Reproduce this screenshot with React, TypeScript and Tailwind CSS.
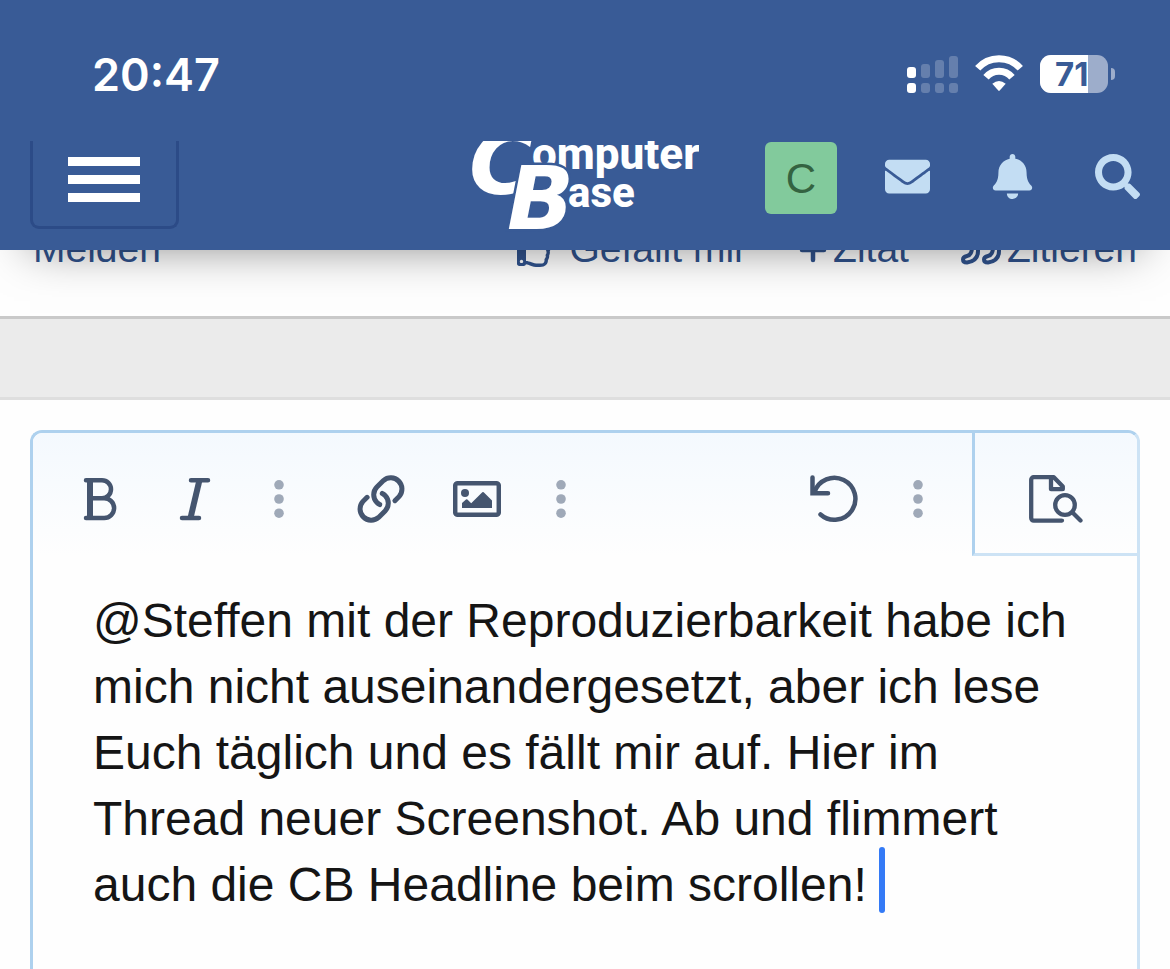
import type { ReactNode } from 'react';
import { FaBell, FaEnvelope, FaRegThumbsUp, FaSearch } from 'react-icons/fa';

const message =
  '@Steffen mit der Reproduzierbarkeit habe ich mich nicht auseinandergesetzt, aber ich lese Euch täglich und es fällt mir auf. Hier im Thread neuer Screenshot. Ab und flimmert auch die CB Headline beim scrollen!';

function StatusBar() {
  return (
    <div className="flex h-[141px] items-center justify-between pt-1.5 pr-[55px] pl-[92px]">
      <span className="pt-0.5 font-['Inter'] text-[45px] leading-none font-semibold">
        20:47
      </span>
      <div className="flex items-center">
        <svg width="51" height="38" viewBox="0 -1 51 38" fill="white">
          <rect x="0" y="11" width="9" height="11" rx="3" />
          <rect x="0" y="27" width="9" height="10" rx="3" />
          <g opacity="0.22">
            <rect x="14" y="8" width="9" height="14" rx="3" />
            <rect x="28" y="4" width="9" height="18" rx="3" />
            <rect x="42" y="0" width="9" height="22" rx="3" />
            <rect x="14" y="27" width="9" height="10" rx="3" />
            <rect x="28" y="27" width="9" height="10" rx="3" />
            <rect x="42" y="27" width="9" height="10" rx="3" />
          </g>
        </svg>
        <svg
          className="ml-4"
          width="50"
          height="38"
          viewBox="-1 0 50 38"
          fill="none"
          stroke="white"
          strokeWidth="7"
        >
          <path d="M2.7 13.3A28.4 28.4 0 0 1 45.3 13.3" />
          <path d="M11 22.2A17 17 0 0 1 37 22.2" />
          <path
            d="M17.3 28.8Q24 23 30.7 28.8L24.7 35.6Q24 36.3 23.3 35.6Z"
            fill="white"
            stroke="none"
          />
        </svg>
        <div className="ml-4 flex h-[38px] w-[68px] overflow-hidden rounded-[11px] bg-[#9dadcb]">
          <span className="w-12 overflow-hidden bg-white pl-[15px] font-['Inter'] text-[33px] leading-[38px] font-bold text-[#395b96]">
            71
          </span>
        </div>
        <span className="ml-[3px] h-3 w-1 rounded-r-full bg-[#9dadcb]" />
      </div>
    </div>
  );
}

function Logo() {
  return (
    <svg
      width="228"
      height="109"
      viewBox="0 0 228 109"
      fill="white"
      role="img"
      aria-label="ComputerBase"
      fontFamily="Roboto, sans-serif"
    >
      <text x="61" y="28" fontSize="44" fontWeight="800">
        omputer
      </text>
      <text x="97" y="66" fontSize="42" fontWeight="800">
        ase
      </text>
      <g
        fontFamily="DejaVu Sans, sans-serif"
        fontSize="88"
        fontWeight="700"
        fontStyle="italic"
      >
        <text x="-2" y="53">
          C
        </text>
        <text
          x="36"
          y="88"
          stroke="#395b96"
          strokeWidth="5"
          paintOrder="stroke"
        >
          B
        </text>
      </g>
    </svg>
  );
}

function NavBar() {
  return (
    <nav className="grid h-[109px] grid-cols-[1fr_auto_1fr] items-start overflow-hidden px-[30px]">
      <button
        aria-label="Menü"
        className="flex h-[88px] w-[149px] flex-col items-start gap-[9px] rounded-b-[9px] border-[3px] border-t-0 border-[#2c4b87] px-[35px] pt-4"
      >
        <span className="h-[9px] w-[72px] bg-white" />
        <span className="h-[9px] w-[72px] bg-white" />
        <span className="h-[9px] w-[72px] bg-white" />
      </button>
      <a href="#start">
        <Logo />
      </a>
      <div className="flex items-center justify-end gap-[60px] pt-px text-[45px] text-[#c3ddf3]">
        <div className="flex items-center gap-12">
          <a
            href="#profil"
            className="flex size-[72px] items-center justify-center rounded-md bg-[#82ca9c] pt-0.5 text-[42px] leading-none text-[#346341]"
          >
            C
          </a>
          <a href="#nachrichten" aria-label="Nachrichten" className="pb-1">
            <FaEnvelope />
          </a>
        </div>
        <a href="#hinweise" aria-label="Hinweise" className="pb-1">
          <FaBell />
        </a>
        <a href="#suche" aria-label="Suche" className="pb-1">
          <FaSearch />
        </a>
      </div>
    </nav>
  );
}

function PostActions() {
  return (
    <div className="-mt-8 flex h-[101px] shrink-0 items-start justify-between border-b-[3px] border-[#c9c9c9] px-[33px] pt-[7px] text-[39px] leading-[48px] text-[#30528c]">
      <a href="#melden">Melden</a>
      <div className="flex gap-[52px]">
        <a href="#like" className="flex items-center gap-4">
          <FaRegThumbsUp className="size-9" />
          Gefällt mir
        </a>
        <a href="#zitat" className="flex items-center gap-1.5">
          <svg
            width="28"
            height="28"
            viewBox="0 0 28 28"
            stroke="currentColor"
            strokeWidth="4.5"
            strokeLinecap="round"
          >
            <path d="M3 15H25M14 4V25" />
          </svg>
          Zitat
        </a>
        <a href="#zitieren" className="flex items-center gap-1.5">
          <svg
            width="40"
            height="36"
            viewBox="0 0 40 36"
            fill="none"
            stroke="currentColor"
            strokeWidth="4"
            strokeLinejoin="round"
          >
            <path d="M5 2H14Q17 2 17 5V20Q17 30 6 31.5Q2 31.5 2 28.5Q2 26 6 25Q11 24 11 16H5Q2 16 2 13V5Q2 2 5 2Z" />
            <path d="M26 2H35Q38 2 38 5V20Q38 30 27 31.5Q23 31.5 23 28.5Q23 26 27 25Q32 24 32 16H26Q23 16 23 13V5Q23 2 26 2Z" />
          </svg>
          Zitieren
        </a>
      </div>
    </div>
  );
}

function ToolButton({ label, children }: { label: string; children: ReactNode }) {
  return (
    <button aria-label={label} className="flex w-24 items-center justify-center">
      <svg
        width="48"
        height="48"
        viewBox="0 0 48 48"
        fill="none"
        stroke="currentColor"
        strokeWidth="5"
        strokeLinecap="round"
      >
        {children}
      </svg>
    </button>
  );
}

function MoreButton() {
  return (
    <button aria-label="Mehr" className="flex w-[72px] items-center justify-center text-[#9fa9b8]">
      <svg width="10" height="48" viewBox="0 0 10 48" fill="currentColor">
        <circle cx="5" cy="9.8" r="4.8" />
        <circle cx="5" cy="24" r="4.8" />
        <circle cx="5" cy="38.2" r="4.8" />
      </svg>
    </button>
  );
}

function Toolbar() {
  return (
    <div className="flex h-[123px] shrink-0 bg-linear-to-b from-[#f4f9fe] to-[#fefefe] text-[#45556f]">
      <div className="flex flex-1 justify-between px-[18px]">
        <div className="flex h-[132px] gap-[18px]">
          <div className="flex">
            <ToolButton label="Fett">
              <path
                d="M11 5.2H27a9 9 0 0 1 0 18H15M27 23.2H29.2a9.9 9.9 0 0 1 0 19.8H11"
                strokeWidth="4.5"
              />
              <path d="M15 6V42" strokeWidth="6" strokeLinecap="butt" />
            </ToolButton>
            <ToolButton label="Kursiv">
              <path d="M20 5.2H37M11 43H28" strokeWidth="4.5" />
              <path d="M28.5 5L19.5 43" strokeWidth="6" strokeLinecap="butt" />
            </ToolButton>
            <MoreButton />
          </div>
          <div className="flex">
            <ToolButton label="Link einfügen">
              <path d="M37.9 25.7l4.3-4.3a11.2 11.2 0 0 0-15.8-15.8l-6.5 6.5a11 11 0 0 0 0 15.5q1.3 1.3 2.8 2" />
              <path d="M10.1 22.3l-4.3 4.3a11.2 11.2 0 0 0 15.8 15.8l6.5-6.5a11 11 0 0 0 0-15.5q-1.3-1.3-2.8-2" />
            </ToolButton>
            <ToolButton label="Bild einfügen">
              <rect x="2.2" y="8.2" width="43.6" height="31.6" rx="2.5" strokeWidth="4.5" />
              <circle cx="12" cy="18" r="4" fill="currentColor" stroke="none" />
              <path
                d="M9 33V28L13 24.6Q13.7 24 14.4 24.6L18.2 28.3L29.3 17.3Q30 16.7 30.7 17.3L39 25.5V33Z"
                fill="currentColor"
                stroke="none"
              />
            </ToolButton>
            <MoreButton />
          </div>
        </div>
        <div className="flex h-[132px]">
          <ToolButton label="Rückgängig">
            <path d="M4.5 17A21 21 0 1 1 10.5 39.5" strokeWidth="4.5" />
            <path d="M2.5 2.5V18.3H18" strokeWidth="4.5" />
          </ToolButton>
          <MoreButton />
        </div>
      </div>
      <button
        aria-label="Vorschau"
        className="flex w-[165px] items-center justify-center border-b-[3px] border-l-[3px] border-b-[#cde3f5] border-l-[#aed1ee] pt-3"
      >
        <svg
          width="54"
          height="48"
          viewBox="0 0 54 48"
          fill="none"
          stroke="currentColor"
          strokeWidth="4.3"
          strokeLinecap="round"
        >
          <path
            d="M33 45.6H4.7a2.5 2.5 0 0 1-2.5-2.5V4.7a2.5 2.5 0 0 1 2.5-2.5H24.8L33.8 11.5V14.2H22V3"
            strokeLinejoin="round"
          />
          <circle cx="36" cy="30" r="13.5" fill="#fafcfe" stroke="none" />
          <circle cx="36" cy="30" r="9.8" />
          <path d="M43.5 37.5L51.5 45.5" />
        </svg>
      </button>
    </div>
  );
}

export default function App() {
  return (
    <div className="flex h-screen flex-col overflow-hidden bg-[#fefefe] font-['Liberation_Sans',Arial,sans-serif]">
      <header className="relative z-10 shrink-0 bg-[#395b96] text-white shadow-[0_26px_45px_-30px_rgba(0,0,0,0.5)]">
        <StatusBar />
        <NavBar />
      </header>

      <PostActions />
      <div className="h-[81px] shrink-0 border-b-[3px] border-[#dedede] bg-[#ebebeb]" />

      {/* Reply editor */}
      <div className="mx-[30px] mt-[30px] flex flex-1 flex-col overflow-hidden rounded-t-xl border-[3px] border-b-0 border-[#aed1ee] border-r-[#cde3f5]">
        <Toolbar />
        <div className="relative flex flex-1 px-[60px] pt-8">
          <textarea
            aria-label="Antwort"
            defaultValue={message}
            spellCheck={false}
            className="flex-1 resize-none overflow-hidden text-[48px] leading-[66px] text-[#151515] outline-none"
          />
          <span className="absolute top-[291px] left-[846px] h-[66px] w-1.5 rounded-full bg-[#347af6]" />
        </div>
      </div>
    </div>
  );
}
